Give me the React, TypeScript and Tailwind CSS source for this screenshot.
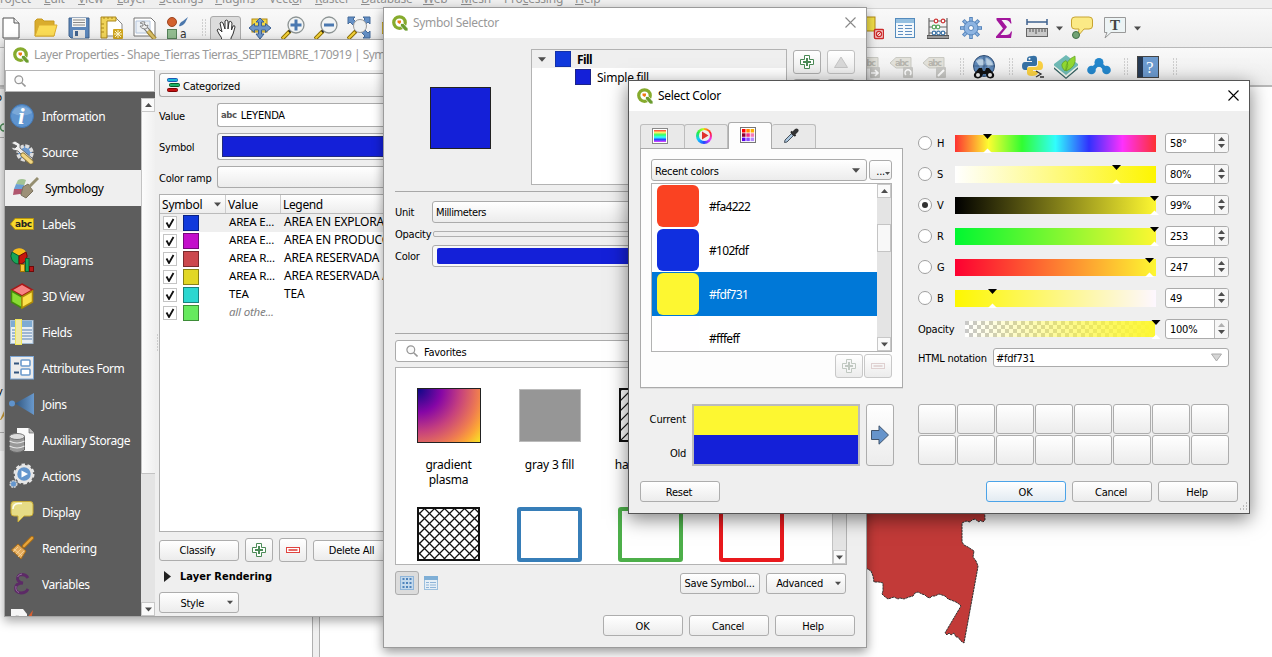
import type { ReactNode } from "react";

type Kids = { children?: ReactNode; className?: string };

const seg = "font-['Noto_Sans','Open_Sans',sans-serif] text-[12px] leading-[16px] whitespace-nowrap";
const tah = "font-['DejaVu_Sans_Condensed','Noto_Sans',sans-serif] text-[11px] tracking-[-0.25px] leading-[14px] whitespace-nowrap";

function S({ w = 24, h, vb, children, className = "" }: Kids & { w?: number; h?: number; vb?: string }) {
  return (
    <svg width={w} height={h ?? w} viewBox={vb ?? `0 0 ${w} ${h ?? w}`} className={`block shrink-0 ${className}`}>
      {children}
    </svg>
  );
}

function Btn({ children, className = "" }: Kids) {
  return (
    <div className={`${tah} flex shrink-0 items-center justify-center rounded-[3px] border border-[#adadad] bg-linear-to-b from-white to-[#ececec] text-black ${className}`}>
      {typeof children === "string" ? <span className="pt-[2px]">{children}</span> : children}
    </div>
  );
}

const Down = ({ c = "#4d4d4d", w = 9 }: { c?: string; w?: number }) => (
  <S w={w} h={5} vb="0 0 9 5"><path d="M0 0H9L4.5 5Z" fill={c} /></S>
);

const Plus = ({ c = "#4b8a56", f = "#fff" }: { c?: string; f?: string }) => (
  <S w={14}>
    <path d="M4.5 .5H9.500V4.500H13.500V9.500H9.500V13.500H4.500V9.500H.5V4.500H4.500Z" fill={f} stroke={c} />
    <path d="M7 3V11M3 7H11" stroke={c} strokeWidth="2" />
  </S>
);
const Minus = ({ c = "#e0433f", f = "#fff" }: { c?: string; f?: string }) => (
  <S w={14} h={6}>
    <rect x=".5" y=".5" width="13" height="5" fill={f} stroke={c} />
    <path d="M2.500 3H11.500" stroke={c} strokeWidth="1.600" />
  </S>
);

const QLogo = () => (
  <S w={16} vb="0 0 32 32">
    <circle cx="15" cy="15" r="11.500" fill="#fff" stroke="#86ab2d" strokeWidth="6.500" />
    <path d="M17 17h6l9 10v5h-6l-9-10Z" fill="#6a9c2f" stroke="#fff" strokeWidth="1.500" />
    <path d="M11 11h7v4l-3 3-4-3Z" fill="#ee7913" />
  </S>
);

const Glass = () => (
  <S w={12}>
    <circle cx="4.800" cy="4.800" r="3.900" fill="#fafafa" stroke="#979797" strokeWidth="1.200" />
    <path d="M7.700 7.700L11.500 11.500" stroke="#979797" strokeWidth="1.600" />
  </S>
);

function TitleBar({ title, active, close, track = "tracking-[-0.3px]" }: { title: string; active?: boolean; close?: boolean; track?: string }) {
  return (
    <div className="flex h-[30px] shrink-0 items-center bg-white pl-2">
      <QLogo />
      <span className={`${seg} ${track} ml-[5px] flex-1 overflow-hidden ${active ? "text-black" : "text-[#999]"}`}>{title}</span>
      {close && (
        <S w={11} className="mr-[10px] mb-[2px]">
          <path d="M.5 .5L10.500 10.500M10.500 .5L.5 10.500" stroke={active ? "#000" : "#888"} strokeWidth="1.100" />
        </S>
      )}
    </div>
  );
}

/* ---------- main window ---------- */

const menus: [string, string, string][] = [
  ["", "P", "roject"], ["", "E", "dit"], ["", "V", "iew"], ["", "L", "ayer"], ["", "S", "ettings"],
  ["", "P", "lugins"], ["Vect", "o", "r"], ["", "R", "aster"], ["", "D", "atabase"], ["", "W", "eb"],
  ["", "M", "esh"], ["Pro", "c", "essing"], ["", "H", "elp"],
];
const menuWidths = ["w-[51px]", "w-[34px]", "w-[39px]", "w-[42px]", "w-[56px]", "w-[54px]", "w-[46px]", "w-[46px]", "w-[62px]", "w-[38px]", "w-[43px]", "w-[71px]", "w-[40px]"];

const Slot = ({ children, className = "w-[33px]" }: Kids) => (
  <div className={`flex shrink-0 items-center justify-center ${className}`}>{children}</div>
);
const Grip = () => (
  <S w={5} h={18}>
    {[0, 1, 2, 3, 4, 5].map((i) => (
      <path key={i} d={`M0 ${i * 3 + 1}h1M3 ${i * 3 + 1}h1`} stroke="#aaa" />
    ))}
  </S>
);

const Magnifier = ({ plus }: { plus?: boolean }) => (
  <S>
    <path d="M1 23L9 15" stroke="#8a6d00" strokeWidth="4" />
    <path d="M1.500 22.500L8 16" stroke="#f5d33a" strokeWidth="2.200" />
    <path d="M8 16L11 13" stroke="#222" strokeWidth="2.500" />
    <circle cx="15" cy="9" r="8" fill="#f2f4f4" stroke="#8d9494" strokeWidth="1.300" />
    <path d={plus ? "M9.500 9H20.500M15 3.500V14.500" : "M10 9H20"} stroke="#4a78b0" strokeWidth="3" />
  </S>
);

const LabelTool = ({ children }: Kids) => (
  <S w={26} h={24}>
    <path d="M1 8L7 2.500H22V13H7Z" fill="#e2e1da" stroke="#c9c9c3" />
    <text x="6" y="11" fontSize="8.500" fontWeight="bold" fontFamily="DejaVu Sans" fill="#b6b5ae" textLength="14">abc</text>
    <rect x="14" y="12" width="10" height="11" rx="1" fill="#c7c7c4" />
    {children}
  </S>
);

function MainToolbars() {
  return (
    <>
      <div className="flex h-[9px] overflow-hidden border-b border-[#d4d4d4] bg-[#efefef]">
        <div className="-ml-[7px] -mt-[9px] flex">
          {menus.map(([a, u, b], i) => (
            <span key={i} className={`${seg} tracking-[-0.2px] ${menuWidths[i]} shrink-0 text-[#8f8f8f]`}>
              {a}<u>{u}</u>{b}
            </span>
          ))}
        </div>
      </div>
      <div className="flex h-[39px] border-b border-[#b8b8b8] bg-linear-to-b from-[#f9f9f9] to-[#ededed]">
        <div className="-ml-1 flex">
          <Slot className="w-[33px] pr-[3px]"><S><path d="M4 2H15L20 7V22H4Z" fill="#fff" stroke="#555" /><path d="M15 2V7H20" fill="#eee" stroke="#555" /></S></Slot>
          <Slot><S><path d="M1 20V5L3 3H8L10 5H20V20Z" fill="#d9ac2d" stroke="#c89a20" /><path d="M1 20L5 9H23L20 20Z" fill="#fadb55" stroke="#dcae30" /></S></Slot>
          <Slot><S><path d="M2 2H22V22H4L2 20Z" fill="#5b86ba" stroke="#41628c" /><rect x="5" y="2" width="14" height="9" fill="#f5f5f3" /><path d="M6 4H18M6 6.500H18M6 9H18" stroke="#888" /><rect x="6" y="14" width="12" height="8" fill="#e4e4e4" /><rect x="8" y="15" width="3" height="5" fill="#41628c" /></S></Slot>
          <Slot><S><path d="M2 2H16L22 8V20H2Z" fill="#fff" stroke="#888" /><path d="M1 1H16V5H7V22H1Z" fill="#f0d458" stroke="#aa861a" /><path d="M4 1V3M8 1V3M12 1V3M1 8H4M1 12H4M1 16H4" stroke="#aa861a" /><rect x="13" y="13" width="10" height="10" rx="1" fill="#cfa51f" /><path d="M18 14V22M14 18H22M15 15L21 21M21 15L15 21" stroke="#fff8d0" /></S></Slot>
          <Slot><S><path d="M1 2H18L22 6V20H1Z" fill="#fff" stroke="#777" /><path d="M3 5H17V17H3Z" fill="#edf1f5" stroke="#b5c6dd" /><path d="M10 9L18 18" stroke="#777" strokeWidth="4.500" /><path d="M10 9L18 18" stroke="#eee" strokeWidth="2.600" /><path d="M7 7Q9 5 12 6L11 8 13 10 15 9Q15 13 12 13 8 13 7 10L10 10 10 8Z" fill="#eee" stroke="#777" strokeWidth=".8" /><path d="M15 15L22 23" stroke="#a08433" strokeWidth="4.500" /><path d="M15 15L22 23" stroke="#dcc268" strokeWidth="2.500" /></S></Slot>
          <Slot><S><circle cx="6" cy="6" r="4.500" fill="#d2602e" stroke="#9d4520" /><path d="M13 10Q14 6 17 5L22 1 19 7Q16 11 13 10Z" fill="#4b77ac" /><rect x="1.500" y="13.500" width="9" height="9" fill="#92bc91" stroke="#55805a" /><text x="14" y="22" fontSize="12" fontFamily="DejaVu Sans Condensed" fill="#333">a</text></S></Slot>
          <Slot className="w-[14px] pl-[6px]"><Grip /></Slot>
          <Slot className="w-[35px]">
            <div className="mt-[8px] flex h-[32px] w-[31px] justify-center rounded-t-[3px] border border-[#aaa] bg-[#dcdcdc] pt-[2px]">
              <S w={20} h={24}><path d="M6 22Q6 18 3 15L1 11Q2 9 4 11L6 13 4 4Q5 2 7 4L9 10V2Q10 0 12 2V10L13 3Q15 1 16 4L15.500 11 17 7Q19 6 19 8L17 15 15 19V23H6Z" fill="#fff" stroke="#333" strokeWidth="1" /></S>
            </div>
          </Slot>
          <Slot><S><rect x="4" y="3" width="15" height="13" fill="#f2d845" stroke="#b28a13" /><path d="M12 2l4 4h-2.500v4h4V7.500L23 12l-5.500 4.500V14h-4v4H16l-4 5-4-5h2.500v-4h-4v2.500L1 12l5.500-4.500V10h4V6H8Z" fill="#6c94c8" stroke="#3d6191" /></S></Slot>
          <Slot><Magnifier plus /></Slot>
          <Slot><Magnifier /></Slot>
          <Slot><S><path d="M1 1h7L6 3l4 4-3 3-4-4-2 2ZM23 1h-7l2 2-4 4 3 3 4-4 2 2ZM23 22h-7l2-2-4-4 3-3 4 4 2-2Z" fill="#6490c6" stroke="#456b99" /><path d="M1 23L9 15" stroke="#8a6d00" strokeWidth="4" /><path d="M1.500 22.500L8 16" stroke="#f5d33a" strokeWidth="2.200" /><circle cx="13" cy="10" r="6.500" fill="#eef0f0" stroke="#999" /></S></Slot>
          <Slot className="w-[480px] justify-start pl-[7px]"><S w={12}><rect width="12" height="12" fill="#f2d845" stroke="#b28a13" /></S></Slot>
          <Slot><S><rect x="1" y="1" width="14" height="14" fill="#f2df49" stroke="#b28a13" /><rect x="14.500" y="13.500" width="9" height="9" rx="1" fill="#f8dada" stroke="#cb2b2b" strokeWidth="1.500" /><circle cx="19" cy="18" r="2.600" fill="none" stroke="#cb2b2b" strokeWidth="1.200" /><path d="M17 20L21 16" stroke="#cb2b2b" /></S></Slot>
          <Slot><S w={20}><rect x=".5" y=".5" width="19" height="19" fill="#f4f8fb" stroke="#548bbd" /><rect x="1" y="1" width="18" height="4" fill="#94bfe0" /><path d="M3 7.500H8M10 7.500H17M3 10.500H8M10 10.500H17M3 13.500H8M10 13.500H17M3 16.500H8M10 16.500H17" stroke="#5f8ec0" /></S></Slot>
          <Slot><S w={22}><path d="M2 1V18M20 1V18M2 4H20M2 10H20M2 16H20" stroke="#666" strokeWidth="1.200" fill="none" /><rect y="18.500" width="22" height="3" fill="#999" stroke="#555" /><g fill="#fff" strokeWidth="1.200"><g stroke="#cd3535"><circle cx="9" cy="4" r="1.800" /><circle cx="16" cy="4" r="1.800" /></g><g stroke="#58a65c"><circle cx="7" cy="10" r="1.800" /><circle cx="11" cy="10" r="1.800" /></g><g stroke="#3d74a7"><circle cx="7" cy="16" r="1.800" /><circle cx="11.500" cy="16" r="1.800" /><circle cx="16" cy="16" r="1.800" /></g></g></S></Slot>
          <Slot><S><g stroke="#5685bb" strokeWidth="3.600">{[0, 45, 90, 135].map((r) => <path key={r} d="M12 1V23" transform={`rotate(${r} 12 12)`} />)}</g><g stroke="#8db4e2" strokeWidth="1.800">{[0, 45, 90, 135].map((r) => <path key={r} d="M12 2V22" transform={`rotate(${r} 12 12)`} />)}</g><circle cx="12" cy="12" r="7" fill="#8db4e2" stroke="#5685bb" /><circle cx="12" cy="12" r="2.500" fill="#fff" stroke="#5685bb" /></S></Slot>
          <Slot><S w={20}><path d="M2.500 0H16.500L17.500 5.500H16.500Q15 2 11.500 2H7.500L13 9 6.500 17H12Q16 17 17 13.500H18L17 20H2V18.500L9 10.500 2.500 2Z" fill="#a2169c" /></S></Slot>
          <Slot><S w={22} h={18}><path d="M1 3H21M1 0V6M21 0V6" stroke="#3e618e" strokeWidth="1.500" /><rect x=".5" y="9.500" width="21" height="8" fill="#c9c9c9" stroke="#666" /><path d="M4 10V13M7 10V13M10 10V15M13 10V13M16 10V13M19 10V13" stroke="#555" /></S></Slot>
          <Slot className="w-3"><Down w={7} /></Slot>
          <Slot><S><path d="M5 1H19Q22.500 1 22.500 4V10Q22.500 13 19 13H14L8 20 9 13H5Q1.500 13 1.500 10V4Q1.500 1 5 1Z" fill="#fbea86" stroke="#c8a431" /><circle cx="6" cy="19" r="3.500" fill="#71a374" stroke="#3f6f48" /></S></Slot>
          <Slot><S><path d="M1.500 1.500H22.500V16.500H8L2 22 4 16.500H1.500Z" fill="#edf4f5" stroke="#999" /><text x="7" y="14" fontFamily="Liberation Serif" fontWeight="bold" fontSize="15" fill="#444">T</text></S></Slot>
          <Slot className="w-3"><Down w={7} /></Slot>
        </div>
      </div>
      <div className="flex h-[39px] justify-start border-b-2 border-[#b8b8b8] bg-linear-to-b from-[#f9f9f9] to-[#ededed] pl-[852px]">
        <Slot><LabelTool><path d="M15 18H21M19 15L22 18 19 21" stroke="#fff" strokeWidth="1.600" fill="none" /></LabelTool></Slot>
        <Slot><LabelTool><path d="M17 20a3 3 0 1 1 4 0" stroke="#fff" strokeWidth="1.500" fill="none" /></LabelTool></Slot>
        <Slot><LabelTool><path d="M16 21L22 15" stroke="#fff" strokeWidth="2" /></LabelTool></Slot>
        <Slot className="w-4 pl-[7px]"><Grip /></Slot>
        <Slot><S><circle cx="12" cy="11" r="10.500" fill="#5d87b7" stroke="#2d4a70" /><path d="M4 6Q10 2 12 6T8 12M14 3Q20 5 21 10L16 12 14 8Z" fill="#b9cfe2" stroke="#9fb9d3" /><path d="M2 11H22M12 1V21" stroke="#37577f" strokeWidth=".7" /><path d="M7 13H10L11 16H13L14 13H17L22 19Q23 23 18.500 23.500 14 23 14 19H11Q10 23 6 23.500 1 23 2 19Z" fill="#111" /><circle cx="6" cy="20" r="2" fill="#eee" /><circle cx="18" cy="20" r="2" fill="#eee" /></S></Slot>
        <Slot className="w-4 pl-[7px]"><Grip /></Slot>
        <Slot><S><path d="M11 1Q16 0 16 4V9Q16 11 13 11H8Q6 11 6 15H4Q1 15 1 11T4 7H11V6H6V4Q6 1 11 1Z" fill="#3671a5" /><circle cx="8.500" cy="3.700" r="1" fill="#fff" /><path d="M17 6H19Q22 7 22 11T19 15H12V16H17V18Q16 21 11 21 6 21 6 18V14Q6 12 9 12H14Q17 12 17 9Z" fill="#fad143" /><path d="M15 16L20 19 15 22M19 22H23" fill="none" stroke="#333" strokeWidth="1.300" /></S></Slot>
        <Slot><S><path d="M0 12L12 22 24 12V14L12 24 0 14Z" fill="#3b6666" /><path d="M0 10L12 20 24 10V12L12 22.500 0 12Z" fill="#eff5ee" /><path d="M0 9L12 0 24 9V10.500L12 20 0 10.500Z" fill="#6fbab5" /><path d="M11 16Q4 9 12 5.500 16 10 11 16ZM12 16Q11 5 21 1 23 12 12 16Z" fill="#92d832" stroke="#57981f" strokeWidth=".6" /></S></Slot>
        <Slot><S><path d="M4.500 15L12 8 19.500 15" fill="none" stroke="#2487cc" strokeWidth="4" /><circle cx="4.500" cy="15" r="4.300" fill="#2487cc" /><circle cx="12" cy="7.500" r="4.500" fill="#2487cc" /><circle cx="19.500" cy="15" r="4.300" fill="#2487cc" /></S></Slot>
        <Slot className="w-4 pl-[7px]"><Grip /></Slot>
        <Slot><S w={22}><rect x=".5" y=".5" width="21" height="21" fill="#6d9bcf" stroke="#444" /><rect x="1" y="1" width="5" height="20" fill="#273b55" /><text x="9" y="17" fontFamily="Liberation Serif" fontSize="17" fill="#fff">?</text></S></Slot>
        <Slot className="w-4 pl-[7px]"><Grip /></Slot>
      </div>
    </>
  );
}

function DockEdge() {
  return (
    <div className={`${tah} flex w-1 shrink-0 flex-col overflow-hidden bg-[#efefef] text-black`}>
      <div className="h-[2px] w-1 bg-[#c8c8c8]" />
      <span className="-ml-[4px] mt-[2px]">o</span>
      <S w={4} h={9} className="mt-[18px]"><circle cx="4" cy="4.500" r="3.500" fill="#e7efe7" stroke="#4b8a56" strokeWidth="1.500" /></S>
      <div className="mt-[5px] h-px bg-[#b0b0b0]" />
      <span className="-ml-[3px] mt-[247px]">y</span>
      <S w={4} h={14} className="mt-2"><path d="M0 13L4 4V9L1 13Z" fill="#c99a35" /></S>
      <div className="mt-[11px] h-px bg-[#b0b0b0]" />
      <div className="mt-[18px] flex-1 bg-white" />
    </div>
  );
}

function MapArea() {
  return (
    <div className="flex flex-1 bg-white">
      <DockEdge />
      <div className="w-[308px] bg-white" />
      <div className="w-2 border-x border-[#b0b0b0] bg-[#efefef]" />
      <S w={952} h={570} vb="320 87 952 570">
        <path
          d="M850 500H984L985 520 983 522 980 520 979 522 975 519 972 520 970 522 966 521 962 523 962 542 964 545 968 547 971 549 974 551 973 557 976 561 978 566 977 572 964 643 961 641 958 637 956 637 954 633 951 635 949 633 947 635 945 633 961 606 959 604 956 602 951 600 948 599 945 596 939 594 935 596 932 596 930 598 927 597 925 595 922 594 918 592 915 593 913 596 909 597 904 599 900 598 898 599 894 597 888 599 884 596 882 594 883 591 883 583 879 582 874 582 873 576 871 571 866 568 850 568Z"
          fill="#c23a38" stroke="#333" strokeWidth="1" strokeDasharray="2.500 .6"
        />
      </S>
    </div>
  );
}

/* ---------- layer properties ---------- */

const sideItems: { label: string; icon: ReactNode; on?: boolean }[] = [
  { label: "Information", icon: <S><circle cx="12" cy="12" r="11.500" fill="#5e94cf" stroke="#4478b4" /><path d="M2 9a11 11 0 0 1 20 0Q12 14 2 9Z" fill="#8eb5de" opacity=".6" /><text x="8" y="20" fontFamily="Liberation Serif" fontStyle="italic" fontWeight="bold" fontSize="24" fill="#fff">i</text></S> },
  { label: "Source", icon: <S><circle cx="15" cy="13" r="7" fill="#6a98ce" stroke="#ddd" strokeWidth="3.500" strokeDasharray="4 1.500" /><path d="M1 3L5 1 10 4 10 8 23 19 20 23 8 11 3 10 1 7 5 8 7 6Z" fill="#eee" stroke="#555" strokeWidth=".8" /><path d="M13 15L21 22" stroke="#8f7a3b" strokeWidth="5" strokeLinecap="round" /><path d="M13 15L21 22" stroke="#f0d684" strokeWidth="3.400" strokeLinecap="round" /></S> },
  { label: "Symbology", on: true, icon: <S w={27} h={24}><path d="M6 4Q10 2 14 4L12 10 4 8Z" fill="#a3c394" /><path d="M4 8L12 9 11 14 2 13Z" fill="#6b9fd6" /><path d="M2 13L11 13 14 20 8 18 1 19Z" fill="#b0566e" /><path d="M11 11L16 8 21 15 14 22 9 19Z" fill="#9c9078" stroke="#7a725e" /><path d="M17 11L26 2" stroke="#958e70" strokeWidth="3" /></S> },
  { label: "Labels", icon: <S><path d="M.5 12L5 6.500H23.500V17.500H5Z" fill="#f7d92c" stroke="#b8950e" /><text x="5" y="15" fontFamily="DejaVu Sans" fontWeight="bold" fontSize="9" fill="#222" textLength="17">abc</text></S> },
  { label: "Diagrams", icon: <S><path d="M9 8L2 5A8 8 0 0 1 16 4Z" fill="#f8bc19" /><path d="M9 8V16A8 8 0 0 1 2 4Z" fill="#18a558" stroke="#0a5f31" /><path d="M9 8L16 4A8 8 0 0 1 9 16Z" fill="#c7160d" stroke="#6f0909" /><rect x="10.500" y="16.500" width="4" height="7" fill="#f8c33b" stroke="#a87600" /><rect x="15.500" y="10.500" width="3.500" height="13" fill="#18a558" stroke="#0a5f31" /><rect x="19.500" y="18.500" width="4" height="5" fill="#b51818" stroke="#6f0909" /></S> },
  { label: "3D View", icon: <S w={24} h={26}><path d="M12 1L22.500 7 12 13 1.500 7Z" fill="#f78484" stroke="#a91818" strokeWidth="1.500" /><path d="M1.500 8L12 14V25L1.500 19Z" fill="#8adc33" stroke="#458b0d" strokeWidth="1.500" /><path d="M22.500 8L12 14V25L22.500 19Z" fill="#fbe04b" stroke="#ae8a08" strokeWidth="1.500" /></S> },
  { label: "Fields", icon: <S w={24} h={26}><rect x=".5" y="1.500" width="22.500" height="23" fill="#e8eef3" stroke="#a4bdd5" /><rect x="1" y="2" width="21" height="6" fill="#7eabd3" /><path d="M2 11H22M2 14H22M2 17H22M2 20H22" stroke="#86a5c8" strokeWidth="1.500" /><rect x="5.500" y=".5" width="6" height="25" fill="#f0e9a8" stroke="#f1e65a" /></S> },
  { label: "Attributes Form", icon: <S><rect x=".5" y=".5" width="23" height="22.500" fill="#ececec" stroke="#7da6d5" /><path d="M4 7.500H9M4 16.500H9" stroke="#33557f" strokeWidth="2" /><rect x="11" y="4" width="9" height="6" rx="1" fill="#fff" stroke="#6b9acd" strokeWidth="1.600" /><rect x="11" y="13" width="9" height="6" rx="1" fill="#fff" stroke="#6b9acd" strokeWidth="1.600" /></S> },
  { label: "Joins", icon: <S w={26} h={22}><circle cx="3" cy="10.500" r="3" fill="#5f93cc" /><path d="M6 10.500L25 0V22Z" fill="url(#jg)" /><defs><linearGradient id="jg"><stop stopColor="#30567f" /><stop offset="1" stopColor="#6999cd" /></linearGradient></defs></S> },
  { label: "Auxiliary Storage", icon: <S w={26} h={26}><path d="M8 1H20L25 6V24H8Z" fill="#fafafa" /><path d="M20 1V6H25" fill="#bbb" stroke="#555" strokeWidth=".6" /><path d="M.5 9V23Q8 28 15.500 23V9Z" fill="#999" stroke="#666" /><ellipse cx="8" cy="9.500" rx="7.500" ry="3" fill="#ddd" stroke="#777" /><path d="M.5 14Q8 18 15.500 14M.5 19Q8 23 15.500 19" fill="none" stroke="#e5e5e5" strokeWidth="1.200" /></S> },
  { label: "Actions", icon: <S w={26} h={26}><circle cx="15" cy="11" r="8" fill="#6496cd" stroke="#e6e6e6" strokeWidth="2.500" /><circle cx="15" cy="11" r="9.500" fill="none" stroke="#e6e6e6" strokeWidth="2" strokeDasharray="3.500 2.500" /><path d="M12.500 7.500L19 11 12.500 14.500Z" fill="#fff" /><circle cx="4.500" cy="21" r="3.300" fill="#6496cd" stroke="#ccc" strokeWidth="1.600" strokeDasharray="2 .7" /></S> },
  { label: "Display", icon: <S><path d="M4 1.500H20Q23 1.500 23 4.500V13Q23 16 20 16H14L8 22 8 16H4Q1 16 1 13V4.500Q1 1.500 4 1.500Z" fill="#e6dc86" stroke="#c7aa35" /><path d="M3 9Q3 4 8 3.500H12" stroke="#fffef0" fill="none" strokeWidth="1.500" /></S> },
  { label: "Rendering", icon: <S><path d="M14 10L22 2" stroke="#a86d18" strokeWidth="4" strokeLinecap="round" /><path d="M14 10L22 2" stroke="#e8a63b" strokeWidth="2.200" strokeLinecap="round" /><path d="M8 8L16 15 11 23 1.500 14Z" fill="#e3aa5b" stroke="#a86d18" /><path d="M4 13L12 20M8 11L3 16M11 13L6 18M14 15L8 21" stroke="#f7d7a0" strokeWidth=".8" /></S> },
  { label: "Variables", icon: <S w={18} h={22}><path d="M15 5Q13 1.500 9 1.500 4 2 4.500 6 5.500 9.500 10 10 3 10 2.500 15 2.500 19.500 8 20 13 20 15 16" fill="none" stroke="#5c2a66" strokeWidth="2.800" /><path d="M3 13Q2 18 6 19.500M4.500 4Q6 1 9 1" stroke="#9a74a4" fill="none" strokeWidth=".9" /></S> },
  { label: "", icon: <S w={22}><path d="M0 0H12L16 5V22H0Z" fill="#f6f6f6" /><path d="M22 1L16 9 17 12 20 11Z" fill="#d95f31" /><path d="M3 8Q7 5 14 11" stroke="#999" fill="none" /></S> },
];

const ScrollBtn = ({ up }: { up?: boolean }) => (
  <div className="flex h-[14px] shrink-0 items-center justify-center border border-[#c8c8c8] bg-[#fafafa]">
    {up ? <S w={7} h={4} vb="0 0 9 5"><path d="M0 5H9L4.500 0Z" fill="#4d4d4d" /></S> : <Down w={7} />}
  </div>
);

const cats: [string, string, string, string][] = [
  ["bg-[#1039dc]", "AREA E...", "AREA EN EXPLORA", ""],
  ["bg-[#c40fcb]", "AREA E...", "AREA EN PRODUCC", ""],
  ["bg-[#cc484e]", "AREA R...", "AREA RESERVADA", ""],
  ["bg-[#e2d725]", "AREA R...", "AREA RESERVADA A", ""],
  ["bg-[#2bd7d0]", "TEA", "TEA", ""],
  ["bg-[#66ea5e]", "all othe...", "", "italic text-[#808080]"],
];

function LayerProperties() {
  return (
    <div className="absolute left-1 top-[39px] flex h-[578px] w-[380px] flex-col overflow-visible border border-r-0 border-[#a5a5a5] bg-[#efefef] shadow-[0_4px_10px_rgba(0,0,0,0.35)]">
      <TitleBar title="Layer Properties - Shape_Tierras Tierras_SEPTIEMBRE_170919 | Sym" track="tracking-[-0.49px]" />
      <div className="flex min-h-0 flex-1">
        <div className="flex w-[150px] shrink-0 flex-col">
          <div className="flex h-[22px] shrink-0 items-center border border-[#b5b5b5] bg-white pl-2"><Glass /></div>
          <div className="flex min-h-0 flex-1 bg-[#5d5d5d] pt-[6px]">
            <div className="flex w-[136px] flex-col overflow-hidden">
              {sideItems.map((it, i) => (
                <div key={i} className={`flex h-9 shrink-0 items-center ${it.on ? "bg-[#efefef] pl-[3px] text-black" : "text-white"}`}>
                  <div className="flex w-[34px] items-center justify-center">{it.icon}</div>
                  <span className={`${seg} ml-[3px] pt-[2px] tracking-[-0.43px]`}>{it.label}</span>
                </div>
              ))}
            </div>
            <div className="flex w-[14px] flex-col bg-[#e4e4e4]">
              <ScrollBtn up />
              <div className="h-[362px] border-b border-l border-[#c3c3c3] bg-linear-to-r from-[#fcfcfc] to-[#f0f0f0]" />
              <div className="flex-1" />
              <ScrollBtn />
            </div>
          </div>
        </div>
        <div className="flex w-1 items-center"><S w={4} h={18}>{[0, 3, 6, 9, 12, 15].map((y) => <path key={y} d={`M2 ${y + 1}h1`} stroke="#aaa" />)}</S></div>
        <div className="flex min-w-0 flex-1 flex-col">
          <div className={`${tah} mt-[3px] flex h-6 items-center rounded-l-[3px] border border-r-0 border-[#ababab] bg-linear-to-b from-white to-[#ececec] pl-[7px]`}>
            <S w={13} h={14}><rect x=".5" y=".5" width="10" height="3" rx="1" fill="#1cb6d6" stroke="#2056b5" /><rect x="2.500" y="5.500" width="10" height="3" rx="1" fill="#1db468" stroke="#075c2b" /><rect x=".5" y="10.500" width="10" height="3" rx="1" fill="#c41111" stroke="#7c0505" /></S>
            <span className="ml-[3px] pt-[3px]">Categorized</span>
          </div>
          <div className={`${tah} mt-[6px] flex h-6 items-center`}>
            <span className="w-[58px] shrink-0 pt-[3px]">Value</span>
            <div className="flex h-6 flex-1 items-center rounded-l-[3px] border border-r-0 border-[#ababab] bg-white pl-[3px]">
              <span className="font-['DejaVu_Sans'] text-[8.5px] font-bold tracking-[-0.4px] text-[#555]">abc</span>
              <span className="ml-1 pt-[2px] tracking-[-0.2px]">LEYENDA</span>
            </div>
          </div>
          <div className={`${tah} mt-[6px] flex h-[27px] items-center`}>
            <span className="w-[58px] shrink-0 pt-[2px]">Symbol</span>
            <div className="flex h-[27px] flex-1 items-center rounded-l-[3px] border border-r-0 border-[#ababab] bg-[#f8f8f8] pl-1">
              <div className="h-[21px] w-full border border-r-0 border-[#222a7a] bg-[#1420d8]" />
            </div>
          </div>
          <div className={`${tah} mt-[6px] flex h-[22px] items-center`}>
            <span className="w-[58px] shrink-0 pt-[4px]">Color ramp</span>
            <div className="h-[22px] flex-1 rounded-l-[3px] border border-r-0 border-[#ababab] bg-linear-to-b from-white to-[#ececec]" />
          </div>
          <div className={`${seg} mt-[6px] flex h-[338px] flex-col border border-r-0 border-[#b0b0b0] bg-white tracking-[-0.2px]`}>
            <div className="flex h-[19px] items-center border-b border-[#bbb] bg-linear-to-b from-white to-[#ededed]">
              <div className="flex h-full w-[66px] items-center justify-between border-r border-[#ccc] pl-[2px] pr-1"><span className="pt-[2px]">Symbol</span><Down w={7} /></div>
              <div className="flex h-full w-[55px] items-center border-r border-[#ccc] pl-[2px] pt-[2px]">Value</div>
              <span className="pl-[2px] pt-[2px] tracking-[-0.35px]">Legend</span>
            </div>
            {cats.map(([c, v, l, x], i) => (
              <div key={i} className={`flex h-[18px] items-center ${i === 0 ? "bg-[#efefef]" : ""}`}>
                <div className="ml-[3px] flex h-[14px] w-[14px] shrink-0 items-center justify-center border border-[#c4c4c4] bg-white">
                  <S w={10}><path d="M1.500 4.500L4 9 8.500 1" fill="none" stroke="#111" strokeWidth="1.800" /></S>
                </div>
                <div className={`ml-[6px] h-4 w-4 shrink-0 border border-black/40 ${c}`} />
                <span className={`-mt-[2px] ml-[30px] w-[55px] shrink-0 text-[11.5px] ${x}`}>{v}</span>
                <span className="-mt-[2px]">{l}</span>
              </div>
            ))}
          </div>
          <div className="mt-[6px] flex h-6 items-center gap-[6px]">
            <Btn className="h-[21px] w-20 pr-[3px]">Classify</Btn>
            <Btn className="h-6 w-7"><Plus /></Btn>
            <Btn className="h-6 w-7"><Minus /></Btn>
            <Btn className="h-[21px] w-[80px] pr-[3px]">Delete All</Btn>
          </div>
          <div className="mt-[5px] flex h-[18px] items-center pl-[5px]">
            <S w={7} h={11}><path d="M0 0L7 5.500 0 11Z" fill="#222" /></S>
            <span className={`${tah} ml-[9px] pt-[2px] text-[11.5px] font-bold tracking-[0.02px]`}>Layer Rendering</span>
          </div>
          <Btn className="mt-[7px] h-[21px] w-20 justify-end pr-[5px]"><span className="mr-[23px] pt-[2px]">Style</span><Down w={6} /></Btn>
        </div>
      </div>
    </div>
  );
}

/* ---------- symbol selector ---------- */

function SymbolItem({ children, label = [] }: Kids & { label?: string[] }) {
  return (
    <div className="flex h-[119px] w-[101px] shrink-0 flex-col items-center">
      <div className="h-[55px]">{children}</div>
      <div className={`${seg} mt-[14px] flex flex-col items-center tracking-[-0.2px]`}>
        {label.map((l) => <span key={l} className="leading-[15px]">{l}</span>)}
      </div>
    </div>
  );
}

const Outline = ({ c }: { c: string }) => (
  <S w={65} h={55}><rect x="2" y="2" width="61" height="51" rx="1" fill="#fff" stroke={c} strokeWidth="4" /></S>
);

function SymbolSelector() {
  return (
    <div className="absolute left-[383px] top-[7px] flex h-[641px] w-[484px] flex-col border border-[#9b9b9b] bg-[#efefef] shadow-[0_4px_10px_rgba(0,0,0,0.4)]">
      <TitleBar title="Symbol Selector" close />
      <div className="flex h-[153px] pt-[11px]">
        <div className="ml-[46px] mt-[38px] h-[62px] w-[61px] border border-[#222] bg-[#1420d8]" />
        <div className="ml-10 h-[136px] w-[256px] border border-[#b3b3b3] bg-white">
          <div className="flex h-[18px] items-center bg-[#efefef] pl-[6px]">
            <Down w={8} />
            <div className="ml-[9px] h-4 w-4 border border-[#1231a8] bg-[#1039dc]" />
            <span className={`${seg} ml-[6px] pt-[2px] font-bold tracking-[-0.6px]`}>Fill</span>
          </div>
          <div className="flex h-[18px] items-center pl-[43px]">
            <div className="h-4 w-4 border border-[#1c2487] bg-[#1420d8]" />
            <span className={`${seg} ml-[6px] pt-[2px] tracking-[-0.25px]`}>Simple fill</span>
          </div>
        </div>
        <div className="ml-[6px] mt-px grid h-[53px] grid-cols-[28px_28px] gap-x-[6px] gap-y-[5px]">
          <Btn className="h-6"><Plus /></Btn>
          <Btn className="h-6 border-[#c0c0c0]!"><S w={14} h={12}><path d="M7 1L13.500 11.500H.5Z" fill="#d8d8d8" stroke="#c4c4c4" /></S></Btn>
          <Btn className="h-6" /><Btn className="h-6" />
        </div>
      </div>
      <div className="mx-[11px] h-px bg-[#a8a8a8]" />
      <div className={`${tah} flex h-[141px] flex-col pl-[11px] pt-[9px]`}>
        <div className="flex h-[22px] items-center">
          <span className="w-[37px] pt-[2px]">Unit</span>
          <div className="flex h-[22px] w-[414px] items-center rounded-[3px] border border-[#ababab] bg-linear-to-b from-white to-[#ececec] pl-[3px] pt-[2px] tracking-[-0.4px]">Millimeters</div>
        </div>
        <div className="mt-[4px] flex h-[14px] items-center">
          <span className="w-[37px] pt-[2px]">Opacity</span>
          <div className="ml-px h-[6px] w-[380px] rounded-[2px] border border-[#b0b0b0] bg-[#eee]" />
        </div>
        <div className="mt-[4px] flex h-[22px] items-center">
          <span className="w-[37px] pt-[2px]">Color</span>
          <div className="h-[22px] w-[414px] rounded-[3px] border border-[#ababab] bg-[#f8f8f8] p-[2px] pl-[4px]"><div className="h-4 rounded-[2px] bg-[#1420d8]" /></div>
        </div>
      </div>
      <div className="mx-[11px] h-px bg-[#a8a8a8]" />
      <div className={`${tah} mx-[11px] mt-[6px] flex h-[22px] items-center rounded-[3px] border border-[#ababab] bg-white pl-[10px]`}>
        <Glass /><span className="ml-[6px] pt-[3px]">Favorites</span>
      </div>
      <div className="ml-[11px] mt-[5px] flex h-[198px] w-[452px] border border-[#b3b3b3] bg-white">
        <div className="flex flex-1 flex-wrap content-start overflow-hidden pl-[2px] pt-5">
          <SymbolItem label={["gradient", "plasma"]}>
            <div className="h-[55px] w-[64px] border border-[#222] bg-[radial-gradient(circle_at_0_0,#0d0887_0%,#8606a6_29%,#c5407e_52%,#ee7b51_74%,#fca636_86%,#f6e726_100%)]" />
          </SymbolItem>
          <SymbolItem label={["gray 3 fill"]}><div className="mt-px h-[53px] w-[62px] border border-[#bbb] bg-[#969696]" /></SymbolItem>
          <SymbolItem label={["hashed black"]}>
            <S w={64} h={54}><rect x="1" y="1" width="62" height="52" fill="#fff" stroke="#111" strokeWidth="2" />{[0, 1, 2, 3, 4, 5, 6, 7, 8, 9, 10, 11].map((i) => <path key={i} d={`M0 ${i * 10 + 4}L64 ${i * 10 - 60}`} stroke="#111" strokeWidth="1.200" />)}</S>
          </SymbolItem>
          <SymbolItem />
          <SymbolItem>
            <S w={63} h={54}>
              <rect width="63" height="54" fill="#fff" />
              {[...Array(13)].map((_, i) => <path key={i} d={`M0 ${i * 10 - 1}L63 ${i * 10 - 64}M0 ${i * 10 - 66}L63 ${i * 10 - 3}`} stroke="#111" strokeWidth="1.300" />)}
              <rect x="1" y="1" width="61" height="52" fill="none" stroke="#111" strokeWidth="2" />
            </S>
          </SymbolItem>
          <SymbolItem><Outline c="#377eb8" /></SymbolItem>
          <SymbolItem><Outline c="#4daf4a" /></SymbolItem>
          <SymbolItem><Outline c="#e9191d" /></SymbolItem>
        </div>
        <div className="flex w-[14px] flex-col justify-end border-l border-[#c3c3c3] bg-[#e4e4e4]"><ScrollBtn /></div>
      </div>
      <div className="mt-[6px] flex h-6 items-center pl-[11px]">
        <div className="flex h-6 w-6 items-center justify-center rounded-[3px] border border-[#adadad] bg-[#dcdcdc]">
          <S w={14}><rect x=".5" y=".5" width="13" height="13" fill="#c4d9ec" stroke="#8fb5d9" /><path d="M3.500 2V12M7 2V12M10.500 2V12" stroke="#4e83bb" strokeWidth="2" strokeDasharray="2 2" /></S>
        </div>
        <S w={14} className="ml-[5px]"><rect x=".5" y=".5" width="13" height="13" fill="#e6eff6" stroke="#9dc0de" /><rect width="14" height="4" fill="#7fafd6" /><path d="M2 6.500H5M6 6.500H12M2 9H5M6 9H12M2 11.500H5M6 11.500H12" stroke="#8eb4d8" /></S>
        <Btn className="ml-[242px] h-[21px] w-20 pr-px">Save Symbol...</Btn>
        <Btn className="ml-[6px] h-[21px] w-20 justify-end pr-1"><span className="mr-[12px] pt-[2px]">Advanced</span><Down w={6} /></Btn>
      </div>
      <div className="mt-5 flex justify-end gap-[6px] pr-[11px]">
        <Btn className="h-[21px] w-20 pr-px">OK</Btn>
        <Btn className="h-[21px] w-20 pr-[2px]">Cancel</Btn>
        <Btn className="h-[21px] w-20 pr-1">Help</Btn>
      </div>
    </div>
  );
}

/* ---------- select color ---------- */

const channels = [
  { n: "H", x: 37.5, v: "58°", g: ["#fd3231", "#fdfd31", "#31fd31", "#31fdfd", "#3131fd", "#fd31fd", "#fd3131"] },
  { n: "S", x: 166.5, v: "80%", g: ["#ffffff", "#fdf500"] },
  { n: "V", x: 204.5, v: "99%", g: ["#000000", "#fdf731"], on: true },
  { n: "R", x: 204.5, v: "253", g: ["#00f731", "#fdf731"] },
  { n: "G", x: 199.5, v: "247", g: ["#fd0031", "#fdf731"] },
  { n: "B", x: 42.5, v: "49", g: ["#fdf700", "#fdf7ff"] },
];

function Spin({ v, dim }: { v: string; dim?: boolean }) {
  return (
    <div className="flex h-5 w-16 shrink-0 items-center overflow-hidden rounded-[3px] border border-[#ababab] bg-white">
      <span className="flex-1 pl-1 pt-[3px]">{v}</span>
      <div className="flex h-full w-[14px] flex-col items-center justify-center gap-[3px] border-l border-[#b5b5b5] bg-[#f6f6f6]">
        <S w={7} h={4} vb="0 0 7 4"><path d="M0 4H7L3.500 0Z" fill={dim ? "#b0b0b0" : "#4d4d4d"} /></S>
        <S w={7} h={4} vb="0 0 7 4"><path d="M0 0H7L3.500 4Z" fill="#4d4d4d" /></S>
      </div>
    </div>
  );
}

const Marks = ({ x }: { x: number }) => (
  <>
    <path d={`M${x - 4.5} 2h9l-4.500 5Z`} fill="#000" />
    <path d={`M${x - 4.5} 21h9l-4.500-4.500Z`} fill="#fff" />
  </>
);

const palette = [["#fa4222", "bg-[#fa4222]"], ["#102fdf", "bg-[#102fdf]"], ["#fdf731", "bg-[#fdf731]"], ["#fffeff", "bg-[#fffeff]"]];
const tabColors = ["#f00", "#ff8a00", "#ffb000", "#8b0030", "#f02d84", "#f77bb5", "#5b00f0", "#8a4dff", "#b58cff"];

function SelectColor() {
  return (
    <div className="absolute left-[628px] top-[80px] flex h-[434px] w-[622px] flex-col border border-[#555] bg-[#efefef] shadow-[0_5px_18px_rgba(0,0,0,0.5)]">
      <TitleBar title="Select Color" active close />
      <div className={`${tah} flex h-[370px] pl-[11px]`}>
        <div className="flex w-[263px] flex-col">
          <div className="mt-[11px] flex h-[27px] items-end">
            <div className="flex h-[25px] w-[45px] items-center justify-center rounded-t-[3px] border border-b-[#ababab] border-[#bdbdbd] bg-[#e9e9e9] pb-[2px] pr-[5px]">
              <S w={16}><defs><linearGradient id="sp" x2="0" y2="1"><stop stopColor="#f33" /><stop offset=".2" stopColor="#fe6" /><stop offset=".4" stopColor="#3f6" /><stop offset=".6" stopColor="#3ff" /><stop offset=".8" stopColor="#24f" /><stop offset="1" stopColor="#e4f" /></linearGradient></defs><rect x=".5" y=".5" width="15" height="15" fill="#fff" stroke="#888" /><rect x="2" y="2" width="12" height="12" fill="url(#sp)" /></S>
            </div>
            <div className="-ml-px flex h-[25px] w-[44px] items-center justify-center rounded-t-[3px] border border-b-[#ababab] border-[#bdbdbd] bg-[#e9e9e9] pb-[2px] pr-1">
              <div className="flex h-4 w-4 items-center justify-center rounded-full bg-[conic-gradient(#f8c018,#f22,#e3f,#24f,#1cf,#2e4,#cf2)]">
                <S w={11}><circle cx="5.500" cy="5.500" r="5.500" fill="#eee" /><path d="M3 1.500L9.500 5.500 3 9.500Z" fill="#e1302c" /></S>
              </div>
            </div>
            <div className="z-10 flex h-[27px] w-[44px] items-center justify-center rounded-t-[3px] border border-b-0 border-[#ababab] bg-[#fdfdfd] pb-[2px] pr-[5px]">
              <S w={16}><rect x=".5" y=".5" width="15" height="15" fill="#fff" stroke="#777" />{tabColors.map((c, i) => <rect key={i} x={2 + (i % 3) * 4.300} y={2 + Math.floor(i / 3) * 4.300} width="3.500" height="3.500" fill={c} />)}</S>
            </div>
            <div className="flex h-[25px] w-[44px] items-center justify-center rounded-t-[3px] border border-b-[#ababab] border-l-0 border-[#bdbdbd] bg-[#e9e9e9] pb-[2px] pr-[5px]">
              <S w={16}><path d="M1.500 14.500L2 12 9 5 11 7 4 14Z" fill="#a9c4dc" stroke="#48525c" /><path d="M8 3.500L12.500 8" stroke="#222" strokeWidth="2" /><path d="M10.500 5.500L13.500 2.500" stroke="#333" strokeWidth="4" strokeLinecap="round" /></S>
            </div>
          </div>
          <div className="-mt-px flex h-[240px] flex-col border border-[#ababab] bg-[#fdfdfd] pl-[10px] pt-[10px] shadow-[0_1px_0_#ddd]">
            <div className="flex h-[22px] gap-[2px]">
              <div className="flex w-[216px] items-center justify-between rounded-[3px] border border-[#ababab] bg-linear-to-b from-white to-[#ececec] pl-[3px] pr-[6px]"><span className="pt-[3px]">Recent colors</span><Down w={8} /></div>
              <div className="mt-px flex h-5 w-[23px] items-end justify-end rounded-[3px] border border-[#ababab] bg-linear-to-b from-white to-[#ececec] pb-[3px] pr-px">
                <span className="leading-[9px]">...</span><Down w={5} />
              </div>
            </div>
            <div className="mt-[2px] flex h-[169px] w-[241px] border border-[#b3b3b3] bg-white">
              <div className="flex flex-1 flex-col overflow-hidden">
                {palette.map(([hex, bg], i) => (
                  <div key={hex} className={`${seg} flex h-11 shrink-0 items-center pl-[5px] ${i === 2 ? "bg-[#0078d7] text-white" : ""}`}>
                    <div className={`h-[42px] w-[42px] rounded-[6px] ${bg}`} />
                    <span className="ml-[10px] pt-[2px] tracking-[-0.7px]">{hex}</span>
                  </div>
                ))}
              </div>
              <div className="flex w-[14px] flex-col bg-[#e4e4e4]">
                <ScrollBtn up />
                <div className="h-[26px]" />
                <div className="h-7 border border-[#c4c4c4] bg-[#f8f8f8]" />
                <div className="flex-1" />
                <ScrollBtn />
              </div>
            </div>
            <div className="mt-[2px] flex gap-px pl-[184px]">
              <Btn className="h-6 w-7 border-[#c8c8c8]!"><Plus c="#c0c8c1" f="#f6f6f6" /></Btn>
              <Btn className="h-6 w-7 border-[#c8c8c8]!"><Minus c="#dfd0d0" f="#f6f6f6" /></Btn>
            </div>
          </div>
          <div className="mt-4 flex h-[62px]">
            <div className="flex w-[46px] flex-col items-end justify-between pb-[5px] pt-[9px]"><span className="tracking-[-0.1px]">Current</span><span>Old</span></div>
            <div className="ml-[6px] w-[168px] border-2 border-[#bcbcbc] bg-white">
              <div className="h-[29px] bg-[#fdf731]" />
              <div className="h-[29px] bg-[#1420d8]" />
            </div>
            <Btn className="ml-[6px] h-[62px] w-7">
              <S w={18} h={20}><path d="M.5 5.500H8V.8L17.500 10 8 19.200V14.500H.5Z" fill="#6694cb" stroke="#41546c" /></S>
            </Btn>
          </div>
        </div>
        <div className="ml-[15px] flex w-[312px] flex-col pt-4">
          {channels.map((c, i) => (
            <div key={c.n} className="flex h-[31px] items-center">
              <div className="flex h-[14px] w-[14px] items-center justify-center rounded-full border border-[#a0a0a0] bg-white">
                {c.on && <div className="h-[6px] w-[6px] rounded-full bg-[#333]" />}
              </div>
              <span className="ml-[5px] w-[13px] pt-[3px]">{c.n}</span>
              <S w={215} h={21}>
                <defs><linearGradient id={`ch${i}`}>{c.g.map((col, k) => <stop key={k} offset={k / (c.g.length - 1)} stopColor={col} />)}</linearGradient></defs>
                <rect x="5" y="3" width="201" height="17" fill={`url(#ch${i})`} />
                <Marks x={c.x} />
              </S>
              <Spin v={c.v} />
            </div>
          ))}
          <div className="flex h-[31px] items-center">
            <span className="w-[42px] pt-[3px]">Opacity</span>
            <S w={205} h={21}>
              <defs>
                <pattern id="chk" width="8" height="8" patternUnits="userSpaceOnUse" x="5" y="3"><rect width="8" height="8" fill="#fff" /><path d="M0 0h4v4H0ZM4 4h4v4H4Z" fill="#c8c8c8" /></pattern>
                <linearGradient id="op"><stop stopColor="#fdf731" stopOpacity="0" /><stop offset="1" stopColor="#fdf731" /></linearGradient>
              </defs>
              <rect x="5" y="3" width="190" height="16" fill="url(#chk)" />
              <rect x="5" y="3" width="190" height="16" fill="url(#op)" />
              <Marks x={196} />
            </S>
            <Spin v="100%" dim />
          </div>
          <div className="mt-[4px] flex h-[19px] items-center">
            <span className="w-[75px] pt-[2px]">HTML notation</span>
            <div className="flex h-[19px] w-[236px] items-center justify-between rounded-[3px] border border-[#ababab] bg-white pl-[2px] pr-[6px]">
              <span className="pt-[2px]">#fdf731</span>
              <S w={11} h={9}><path d="M.5 1H10.500L5.500 8Z" fill="#d5d5d5" stroke="#aaa" /></S>
            </div>
          </div>
          <div className="mt-[37px] grid grid-cols-[repeat(8,38px)] gap-px">
            {[...Array(16)].map((_, i) => <Btn key={i} className="h-[30px] from-[#f6f6f6]" />)}
          </div>
        </div>
      </div>
      <div className="flex h-[21px] items-center pl-[11px] pr-[11px]">
        <Btn className="h-[21px] w-20 pr-[2px]">Reset</Btn>
        <div className="flex-1" />
        <Btn className="h-[21px] w-20 border-[#4ba3e8]! pr-px to-[#e3ebf2]!">OK</Btn>
        <Btn className="ml-[6px] h-[21px] w-20 pr-[2px]">Cancel</Btn>
        <Btn className="ml-[6px] h-[21px] w-20 pr-[2px]">Help</Btn>
      </div>
      <S w={10} h={10} className="ml-auto mr-px"><path d="M8 1h1M8 4h1M5 4h1M8 7h1M5 7h1M2 7h1" stroke="#aaa" strokeWidth="1.500" /></S>
    </div>
  );
}

export default function App() {
  return (
    <div className="relative flex h-[657px] w-[1272px] flex-col overflow-hidden bg-white text-black">
      <MainToolbars />
      <MapArea />
      <LayerProperties />
      <SymbolSelector />
      <SelectColor />
    </div>
  );
}
